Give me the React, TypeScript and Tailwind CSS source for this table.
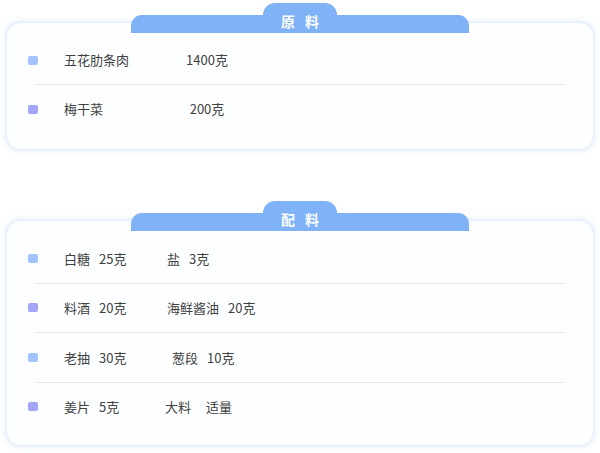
const mains = [
  { name: '五花肋条肉', amount: '1400克', dot: 'bg-[#a2c4fb]' },
  { name: '梅干菜', amount: '200克', dot: 'bg-[#a3a5f6]' },
];

interface Pair {
  name: string;
  amount: string;
}

const extras: { a: Pair; b: Pair; first: string; gap: string; dot: string }[] = [
  { a: { name: '白糖', amount: '25克' }, b: { name: '盐', amount: '3克' }, first: 'w-[103px]', gap: 'ml-[9px]', dot: 'bg-[#a2c4fb]' },
  { a: { name: '料酒', amount: '20克' }, b: { name: '海鲜酱油', amount: '20克' }, first: 'w-[103px]', gap: 'ml-[9px]', dot: 'bg-[#a3a5f6]' },
  { a: { name: '老抽', amount: '30克' }, b: { name: '葱段', amount: '10克' }, first: 'w-[108px]', gap: 'ml-[9px]', dot: 'bg-[#a2c4fb]' },
  { a: { name: '姜片', amount: '5克' }, b: { name: '大料', amount: '适量' }, first: 'w-[101px]', gap: 'ml-[15px]', dot: 'bg-[#a3a5f6]' },
];

function Tab({ title }: { title: string[] }) {
  return (
    <div className="relative z-10 flex flex-col items-center">
      <div className="w-[74px] h-[12px] rounded-t-[12px] bg-[#7fb2f6]" />
      <div className="w-[338px] h-[18px] rounded-t-[11px] bg-[#7fb2f6]" />
      <div className="absolute top-[8px] left-0 right-0 flex justify-center gap-[10px] text-[14px] leading-[20px] font-semibold text-white">
        {title.map((t) => (
          <span key={t}>{t}</span>
        ))}
      </div>
    </div>
  );
}

function Card({ title, children, pb }: { title: string[]; children: React.ReactNode; pb: string }) {
  return (
    <section>
      <Tab title={title} />
      <div className={`-mt-[11px] rounded-[14px] border border-[#e3edfc] bg-[#fdfeff] pt-[13px] ${pb} shadow-[0_0_6px_rgba(140,180,240,0.35)]`}>
        {children}
      </div>
    </section>
  );
}

function Divider() {
  return <div className="ml-[27px] mr-[27px] h-px bg-[#e6e8ec]" />;
}

function Dot({ color }: { color: string }) {
  return <span className={`w-[10px] h-[9px] rounded-[2px] shrink-0 ${color}`} />;
}

export default function App() {
  return (
    <div className="min-h-[453px] bg-white px-[6px] pt-[3px] text-[13px] text-[#404040] font-['Noto_Sans_CJK_SC',sans-serif]">
      <Card title={['原', '料']} pb="pb-[16px]">
        {mains.map((m, i) => (
          <div key={m.name}>
            {i > 0 && <Divider />}
            <div className="flex items-center h-[48px] pl-[21px]">
              <Dot color={m.dot} />
              <span className="ml-[26px] w-[113px]">{m.name}</span>
              <span className="w-[60px] text-center">{m.amount}</span>
            </div>
          </div>
        ))}
      </Card>

      <div className="h-[51px]" />

      <Card title={['配', '料']} pb="pb-[14px]">
        {extras.map((r, i) => (
          <div key={r.a.name}>
            {i > 0 && <Divider />}
            <div className="flex items-center h-[48.5px] pl-[21px]">
              <Dot color={r.dot} />
              <span className={`ml-[26px] ${r.first}`}>
                {r.a.name}
                <span className="ml-[9px]">{r.a.amount}</span>
              </span>
              <span>
                {r.b.name}
                <span className={r.gap}>{r.b.amount}</span>
              </span>
            </div>
          </div>
        ))}
      </Card>
    </div>
  );
}
